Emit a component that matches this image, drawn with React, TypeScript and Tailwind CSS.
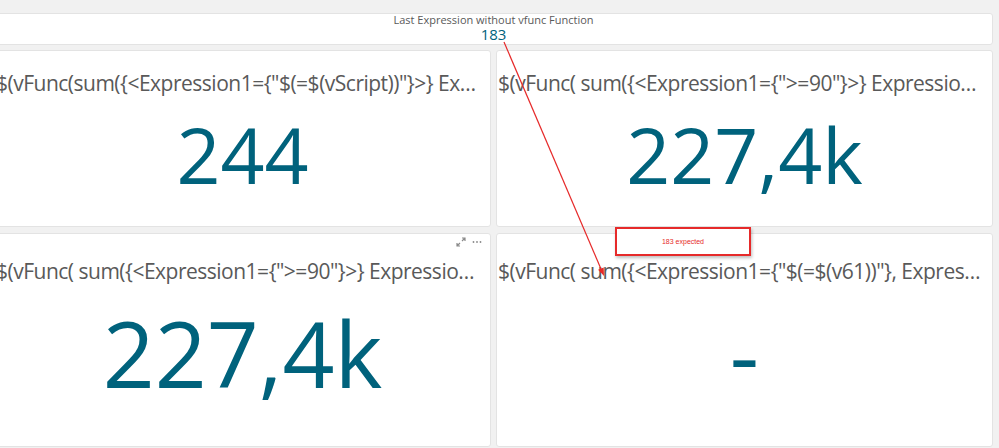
import React from "react";

const teal = "text-[#00627c]";

type KpiProps = {
  title: string;
  value: string;
  big?: boolean;
  showTools?: boolean;
};

const KpiCard = ({ title, value, big = false, showTools = false }: KpiProps) => (
  <div className="relative flex flex-col items-center min-w-0 bg-white border border-[#e3e3e3] rounded-[3px] overflow-hidden">
    {showTools && (
      <div className="absolute right-[8px] top-[3px] flex items-center gap-[6px] text-[#8a8a8a]">
        <svg width="10" height="10" viewBox="0 0 10 10" fill="none" stroke="currentColor" strokeWidth="1.2">
          <path d="M6 1h3v3M9 1 6 4M4 9H1V6M1 9l3-3" />
        </svg>
        <svg width="10" height="4" viewBox="0 0 10 4" fill="currentColor">
          <circle cx="1.5" cy="2" r="0.9" />
          <circle cx="5" cy="2" r="0.9" />
          <circle cx="8.5" cy="2" r="0.9" />
        </svg>
      </div>
    )}
    <div
      className={`w-full pl-[1px] pr-[8px] h-[30px] leading-[30px] text-[21px] tracking-[-0.5px] text-[#595959] whitespace-nowrap overflow-hidden text-ellipsis ${
        big ? "mt-[22px]" : "mt-[17px]"
      }`}
    >
      {title}
    </div>
    <div
      className={`leading-none ${teal} ${
        big ? "mt-[22px] text-[91px]" : "mt-[18px] text-[77px]"
      }`}
    >
      {value}
    </div>
  </div>
);

export default function App() {
  return (
    <div className="relative w-[999px] h-[448px] overflow-hidden bg-[#f1f1f1] font-['Open_Sans',sans-serif]">
      <div className="h-[12px] overflow-hidden">
        <div className="mt-[-10px] pl-[2px] text-[12px] leading-[12px] text-[#cfcfcf]">
          Test vFunction mit Variablen
        </div>
      </div>
      <div className="ml-[-6px] w-[999px] flex flex-col gap-[5px] pt-[1px]">
        <div className="h-[32px] bg-white border border-[#e3e3e3] rounded-[3px] flex flex-col items-center">
          <div className="mt-[-1px] text-[11px] leading-[14px] text-[#595959]">
            Last Expression without vfunc Function
          </div>
          <div className={`mt-[-1px] text-[15px] leading-[16px] ${teal}`}>183</div>
        </div>
        <div className="grid grid-cols-2 grid-rows-[177px_214px] gap-x-[5px] gap-y-[6px]">
          <KpiCard
            title={'$(vFunc(sum({<Expression1={"$(=$(vScript))"}>} Expression2)))'}
            value="244"
          />
          <KpiCard
            title={'$(vFunc( sum({<Expression1={">=90"}>} Expression2)))'}
            value="227,4k"
          />
          <KpiCard
            title={'$(vFunc( sum({<Expression1={">=90"}>} Expression2)))'}
            value="227,4k"
            big
            showTools
          />
          <KpiCard
            title={'$(vFunc( sum({<Expression1={"$(=$(v61))"}, Expression2)))'}
            value="-"
            big
          />
        </div>
      </div>

      <div className="absolute left-[615px] top-[227px] w-[136px] h-[29px] bg-white border-2 border-[#e62a2a] shadow-[1px_2px_3px_rgba(0,0,0,0.25)] flex items-center justify-center">
        <span className="text-[7px] leading-none text-[#e62a2a] font-['Liberation_Sans',sans-serif]">
          183 expected
        </span>
      </div>

      <svg className="absolute left-0 top-0 pointer-events-none" width="999" height="448">
        <line x1="504" y1="42" x2="601" y2="269" stroke="#e62a2a" strokeWidth="1.2" />
        <polygon points="604,276 598.1,269.8 603.7,267.4" fill="#e62a2a" />
      </svg>
    </div>
  );
}
